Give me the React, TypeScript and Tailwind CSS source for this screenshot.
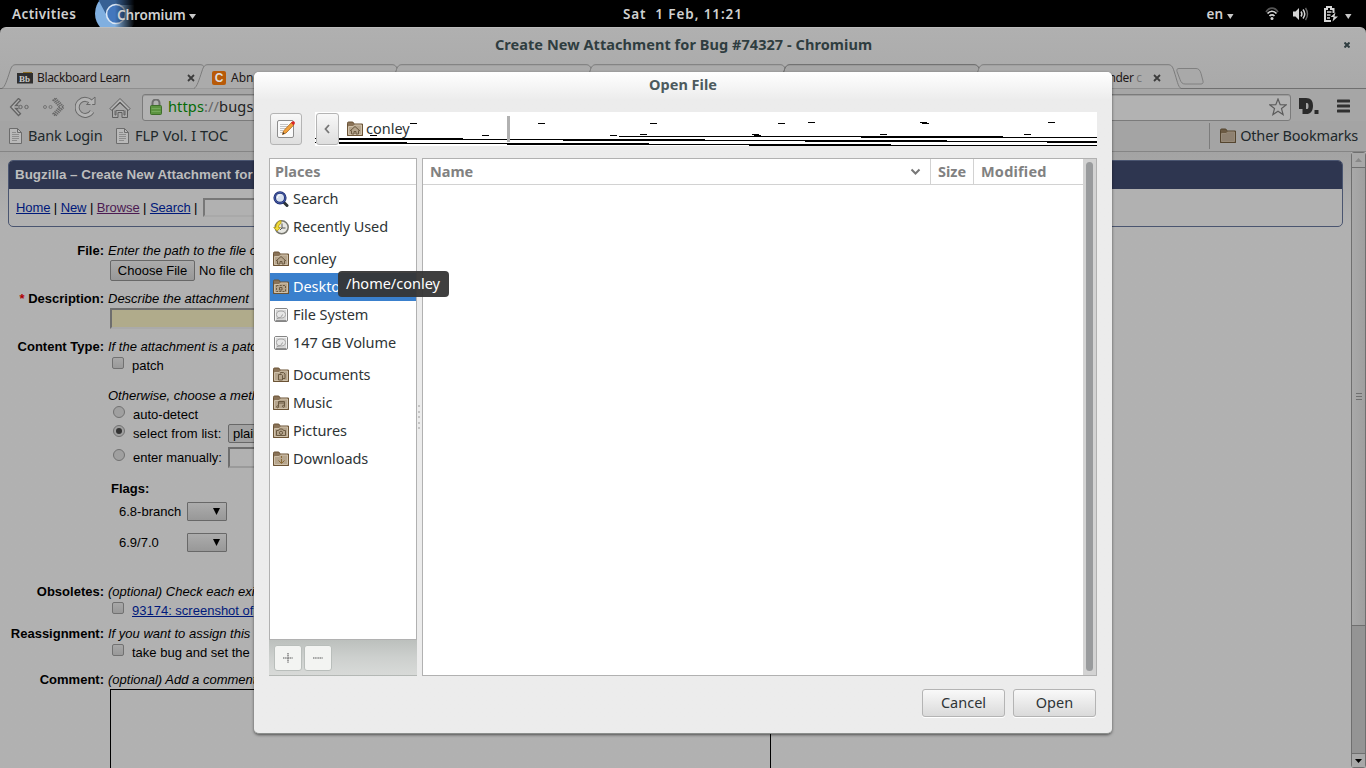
import type { ReactNode } from 'react'

const GTK = "font-['Noto_Sans',sans-serif]"
const WEB = "font-['Liberation_Sans',Arial,sans-serif]"

type Emblem = 'home' | 'desktop' | 'documents' | 'music' | 'pictures' | 'downloads' | 'none'

function FolderIcon({ emblem = 'none', dim = false }: { emblem?: Emblem; dim?: boolean }) {
  return (
    <svg width="16" height="16" viewBox="0 0 16 16" fill="none" className="shrink-0">
      <path d="M.5 2.2Q.5 1 1.5 1h4.3l1.4 2h8.3v11.5H.5z" fill={dim ? '#6b5a43' : '#8a7358'} stroke={dim ? '#54452f' : '#6b5335'} />
      <path d="M1.5 5.5h4.8l1.2-1.5h7v9.5h-13z" fill={dim ? '#8e8171' : '#b6a58d'} stroke={dim ? '#978a78' : '#cfc1aa'} />
      <path d="M.5 14.5h15V4" stroke={dim ? '#54452f' : '#6b5335'} />
      <g stroke="#6a5940" strokeWidth="1">
        {emblem === 'home' && <path d="M3 10l5-4.5 5 4.5M4.5 9.5v3.5H7v-2.5h2V13h2.5V9.5" />}
        {emblem === 'desktop' && (
          <>
            <path d="M3.5 6.5h9v6h-9z" strokeDasharray="2 1.2" />
            <path d="M6.5 8.5h2.5v2.5H6.5z" />
          </>
        )}
        {emblem === 'documents' && <path d="M5.5 7.5h3l1 1V13h-4zM7.5 6.5V5.5h3l1.5 1.5v4.5h-2" />}
        {emblem === 'music' && (
          <>
            <path d="M5.500 11.500v-5h6v4.500M5.500 8h6" />
            <circle cx="4.600" cy="11.800" r="1" />
            <circle cx="10.500" cy="11.300" r="1" />
          </>
        )}
        {emblem === 'pictures' && (
          <>
            <path d="M3.500 7.500h2l1-1.500h3l1 1.500h2v5h-9z" />
            <circle cx="8" cy="9.800" r="1.600" />
          </>
        )}
        {emblem === 'downloads' && <path d="M8.500 5v2M8.500 8v4M5.500 9.500l3 3 3-3" stroke="#8a6a35" />}
      </g>
    </svg>
  )
}

function DriveIcon() {
  return (
    <svg width="16" height="16" viewBox="0 0 16 16" fill="none">
      <rect x="1.500" y="1.500" width="13" height="13" rx="1.500" fill="#d6d6d6" stroke="#858585" />
      <rect x="2.500" y="2.500" width="11" height="11" stroke="#f4f4f4" />
      <ellipse cx="8" cy="7.500" rx="4.500" ry="3.500" fill="#e6e6e6" stroke="#a8a8a8" />
      <path d="M4 11.500c2 0 5-1.500 5.500-4" stroke="#9c9c9c" />
      <path d="M2.500 13.500h11" stroke="#8d8d8d" />
    </svg>
  )
}

function SearchIcon() {
  return (
    <svg width="16" height="16" viewBox="0 0 16 16" fill="none">
      <path d="M10.500 11l3.500 3.500" stroke="#2e3436" strokeWidth="3" strokeLinecap="round" />
      <circle cx="7" cy="6.800" r="5.300" fill="#d7e0ee" stroke="#1d2c6f" strokeWidth="2.600" />
      <circle cx="7" cy="6.800" r="5.300" stroke="#4a62ae" strokeWidth="1" />
      <path d="M4.500 7c0-2 1-3 3-3.200" stroke="#fff" />
    </svg>
  )
}

function RecentIcon() {
  return (
    <svg width="16" height="16" viewBox="0 0 16 16" fill="none">
      <circle cx="8.700" cy="8.300" r="6.500" fill="#e7e7e2" stroke="#77776f" strokeWidth="1.500" />
      <path d="M9 4.500V9h3.500M9 9l-2 2" stroke="#555" />
      <path d="M.7 8.500h2C3 4.500 5 2.300 8 1.500v3C6.300 5 5.500 6.500 5.500 8.500h2L4.200 12z" fill="#f2dc3c" stroke="#b39a10" strokeWidth=".8" />
    </svg>
  )
}

function PageIcon() {
  return (
    <svg width="13" height="16" viewBox="0 0 13 16" fill="none" className="shrink-0">
      <path d="M.5.5h8l4 4v11H.5z" fill="#b9b9b9" stroke="#6c6c6c" />
      <path d="M8.500.5v4h4" stroke="#6c6c6c" />
      <path d="M3 4.500h4M3 6.500h7M3 8.500h7M3 10.500h7M3 12.500h5" stroke="#8d8d8d" />
    </svg>
  )
}

function TopBar() {
  return (
    <header className="flex h-[27px] shrink-0 items-center bg-black pt-px font-['Noto_Sans',sans-serif] text-[13.5px] font-semibold text-[#d0d0d0]">
      <span className="ml-3 w-[83px] tracking-[0.4px]">Activities</span>
      <div className="relative -mt-px h-[27px] w-[110px] overflow-hidden">
        <svg width="44" height="27" viewBox="0 0 44 27" className="absolute left-0 top-0">
          <defs>
            <linearGradient id="appFade" x1="0" x2="1">
              <stop offset=".45" stopColor="#000" stopOpacity="0" />
              <stop offset=".9" stopColor="#000" />
            </linearGradient>
          </defs>
          <circle cx="21" cy="13.500" r="21" fill="#80afe0" />
          <path d="M4 1l9 17L20 5h22V-4H2z" fill="#376094" />
          <circle cx="21" cy="14" r="9.500" fill="#4377bd" stroke="#dbe7f5" strokeWidth="1.600" />
          <rect width="44" height="27" fill="url(#appFade)" />
        </svg>
        <span className="absolute left-[22px] top-[5px] leading-[20px] tracking-[-0.1px]">Chromium</span>
        <svg width="7" height="5" className="absolute left-[94px] top-[14px]"><path d="M0 0h7L3.500 5z" fill="#c8c8c8" /></svg>
      </div>
      <span className="ml-[418px] w-[160px] whitespace-pre tracking-[0.9px]">Sat  1 Feb, 11:21</span>
      <div className="ml-auto flex items-center pr-[14px]">
        <span>en</span>
        <svg width="7" height="5" className="ml-1 mt-1"><path d="M0 0h6.500L3.300 5z" fill="#c8c8c8" /></svg>
        <svg width="14" height="14" viewBox="0 0 14 14" fill="none" className="ml-[31px]">
          <path d="M1 5C4-.2 10-.2 13 5" stroke="#555" strokeWidth="1.600" />
          <path d="M2.500 6.500c2.500-3 6.500-3 9 0M4.500 9c1.500-1.600 3.500-1.600 5 0" stroke="#d5d5d5" strokeWidth="1.700" />
          <circle cx="7" cy="11.500" r="1.500" fill="#d5d5d5" />
        </svg>
        <svg width="16" height="14" viewBox="0 0 16 14" fill="none" className="ml-[14px]">
          <path d="M0 4.500h2.500L6 1v12L2.500 9.500H0z" fill="#d5d5d5" />
          <path d="M8 4.500q1.800 2.500 0 5M10 2.500q3.500 4.500 0 9" stroke="#d5d5d5" strokeWidth="1.500" />
          <path d="M12.500 1q4 6 0 12" stroke="#666" strokeWidth="1.400" />
        </svg>
        <svg width="15" height="16" viewBox="0 0 15 16" fill="none" className="ml-[14px]">
          <path d="M8 15H2V3h2V1h4v2h2.500v4" stroke="#d5d5d5" strokeWidth="2" />
          <path d="M4 6h4.500M4 9h3.500M4 12h3" stroke="#d5d5d5" strokeWidth="1.600" />
          <path d="M12.500 6.500L7.500 11h3l-1 4.500L15 10.500h-3.500z" fill="#d5d5d5" />
        </svg>
        <svg width="7" height="5" className="ml-[7px] mt-1"><path d="M0 0h6.500L3.300 5z" fill="#c8c8c8" /></svg>
      </div>
    </header>
  )
}

function Tab({ children, first = false, active = false }: { children?: ReactNode; first?: boolean; active?: boolean }) {
  return (
    <div className={`relative h-[25px] shrink-0 ${first ? 'w-[192px]' : 'w-[194px]'}`}>
      <svg width="214" height="25" viewBox="0 0 214 25" preserveAspectRatio="none" className="absolute -left-[2px] top-0">
        <path
          d="M0 24.500C3 23 5 16 8 7 9.500 2 11 .7 14 .7h184c3 0 4.500 1.300 6 6.300 3 9 4 16 7 17.500"
          fill={active ? '#a5a5a5' : '#ababab'}
          stroke={active ? '#666' : '#7c7c7c'}
        />
      </svg>
      <div className={`relative flex h-full items-center pt-[2px] text-[12px] text-[#1e1717] ${first ? 'pl-[13px]' : 'pl-[16px]'}`}>{children}</div>
    </div>
  )
}

function CloseMark() {
  return (
    <svg width="8" height="8" viewBox="0 0 8 8"><path d="M1 1l6 6M7 1L1 7" stroke="#3c3c3c" strokeWidth="1.800" /></svg>
  )
}

function BrowserChrome() {
  return (
    <div className={`shrink-0 bg-black ${GTK}`}>
      <div className="rounded-t-[6px] border-t border-[#bdbdbd] bg-linear-to-b from-[#b0b0b0] to-[#a2a2a2]">
        <div className="relative flex h-[36px] items-center justify-center pb-[2px] pl-[1px] text-[14.5px] font-bold text-[#2f3d40]">
          <span className="tracking-[0.06px]">Create New Attachment for Bug #74327 - Chromium</span>
          <svg width="6" height="6" viewBox="0 0 6 6" className="absolute right-[16px] top-[14px]">
            <path d="M.5.5l5 5M5.500.5l-5 5" stroke="#2f3d40" strokeWidth="2" />
          </svg>
        </div>
        <div className="flex h-[25px] border-b border-[#707070] pl-[4px]">
          <Tab first>
            <svg width="16" height="12" viewBox="0 0 16 12">
              <path d="M6 0h9v4H6z" fill="#8a6b20" />
              <path d="M0 1h16v10.500H0z" fill="#2f2f2f" />
              <text x="2" y="9.800" fontSize="9" fontWeight="700" fontFamily="Liberation Serif, serif" fill="#c9c9c9">Bb</text>
            </svg>
            <span className="ml-1 w-[150px] tracking-[-0.35px]">Blackboard Learn</span>
            <CloseMark />
          </Tab>
          <Tab>
            <span className="flex size-[14px] items-center justify-center rounded-[2px] bg-[#b85a08] font-['Liberation_Sans',sans-serif] text-[12px] font-bold text-[#ddd]">C</span>
            <span className="ml-[5px]">Abno</span>
          </Tab>
          <Tab />
          <Tab />
          <Tab active />
          <Tab>
            <span className="ml-[114px] tracking-[-0.35px]">ender <span className="text-[#777]">c</span></span>
            <span className="ml-[11px]"><CloseMark /></span>
          </Tab>
          <svg width="28" height="17" viewBox="0 0 28 17" className="ml-[10px] mt-[4px]" fill="none">
            <path d="M3 .5h17c2.500 0 4 1.500 5 5l2 7.500c.5 2-.5 3-2 3H9c-2.500 0-4-1.500-5-4.500L1 3.500C.5 1.500 1 .5 3 .5z" stroke="#808080" fill="#a9a9a9" />
          </svg>
        </div>
        <div className="flex h-[32px] items-end bg-[#a6a6a6] pl-[9px]">
          <svg width="22" height="20" viewBox="0 0 22 20" fill="none" className="mb-[4px]">
            <path d="M9.500 1.500L1.500 10l8 8.500 2-1.700L6.500 11.500h3M9.500 1.500l2 1.700L6.500 8.500h3" stroke="#636363" strokeWidth="1.300" fill="#b0b0b0" />
            <circle cx="11.500" cy="10" r="1.700" stroke="#666" />
            <circle cx="17.500" cy="10" r="1.700" stroke="#666" />
          </svg>
          <svg width="22" height="20" viewBox="0 0 22 20" fill="none" className="mb-[4px] ml-[12px]">
            <path d="M12.500 1.500l8 8.500-8 8.500M12.500 1.500l-1.800 1.700L17 10l-6.300 6.800 1.800 1.700" stroke="#686868" strokeWidth="2.400" strokeDasharray="1.200 .8" />
            <circle cx="2" cy="10" r="1.500" stroke="#757575" />
            <circle cx="7.500" cy="10" r="1.500" stroke="#757575" />
          </svg>
          <svg width="22" height="22" viewBox="0 0 22 22" fill="none" className="mb-[3px] ml-[10px]">
            <path d="M17 15.500a8 8 0 1 1-.5-9" stroke="#686868" strokeWidth="5" />
            <path d="M11.500 8.500h8.500V1z" fill="#b4b4b4" stroke="#686868" />
            <path d="M17 15.500a8 8 0 1 1-.5-9l-1 2" stroke="#b4b4b4" strokeWidth="3" />
          </svg>
          <svg width="22" height="22" viewBox="0 0 22 22" fill="none" className="mb-[2px] ml-[12px]">
            <path d="M1 11.500L11 1.500l10 10-1.500 1.800L11 5l-8.500 8.300z" stroke="#5f5f5f" fill="#b4b4b4" />
            <path d="M3.500 13v7.500h5.500v-5h4v5h5.500V13L11 6z" stroke="#5f5f5f" fill="#aaa" />
            <path d="M6 13.500v4.500h1v-4.500h8v4.500h1v-4.500" stroke="#5f5f5f" strokeWidth=".9" />
          </svg>
          <div className="ml-[11px] flex h-[27px] w-[1149px] items-center rounded-[3px] border border-[#7b7b7b] bg-[#b2b2b2] pb-[2px] pl-[7px] shadow-[inset_0_1px_0_#9b9b9b]">
            <svg width="12" height="16" viewBox="0 0 12 16" fill="none">
              <path d="M2.500 7V4a3.500 3.500 0 0 1 7 0v3" stroke="#6e6e6e" strokeWidth="2" />
              <rect x=".5" y="6.500" width="11" height="9" rx="1" fill="#5c9440" stroke="#3f6e2b" />
              <path d="M1.500 9.500h9M1.500 12.500h9" stroke="#75a95b" />
            </svg>
            <span className="ml-[6px] text-[14.6px] tracking-[0.1px] text-[#222]"><span className="text-[#066b06]">https</span><span className="text-[#666]">://</span>bugs</span>
            <svg width="18" height="18" viewBox="0 0 18 18" fill="none" className="ml-auto mr-[3px]">
              <path d="M9 1l2.200 5.600 6 .3-4.700 3.700 1.600 6L9 13.200l-5.100 3.400 1.600-6L.8 6.900l6-.3z" stroke="#5c5c5c" strokeWidth="1.200" />
            </svg>
          </div>
          <svg width="20" height="17" viewBox="0 0 20 17" className="mb-[6px] ml-[8px]">
            <path fillRule="evenodd" d="M0 0h7c5 0 7 3 7 7.700S12 16 7 16H3.500v-5H0zM7 5v6h1.200c1 0 1.300-1.300 1.300-3S9 5 8 5z" fill="#2a2a2a" />
            <path d="M15.500 12h4v4h-4z" fill="#2a2a2a" />
          </svg>
          <svg width="13" height="14" viewBox="0 0 13 14" className="mb-[8px] ml-[18px]">
            <path d="M1 2h11M1 7h11M1 12h11" stroke="#303030" strokeWidth="3" strokeLinecap="round" />
          </svg>
        </div>
        <div className="flex h-[31px] items-center border-b border-[#858585] bg-[#a4a4a4] pl-[9px] text-[14.5px] text-[#20282b]">
          <PageIcon />
          <span className="ml-[6px] w-[88px] tracking-[-0.15px]">Bank Login</span>
          <PageIcon />
          <span className="ml-[6px]">FLP Vol. I TOC</span>
          <div className="ml-auto flex h-[26px] items-center border-l border-[#7c7c7c] pl-[10px] pr-[8px]">
            <FolderIcon dim />
            <span className="ml-1 tracking-[-0.18px]">Other Bookmarks</span>
          </div>
        </div>
      </div>
    </div>
  )
}

function Row({ label, required, hint, className, children }: { label: string; required?: boolean; hint: string; className: string; children?: ReactNode }) {
  return (
    <div className={`flex ${className}`}>
      <div className="w-[104px] shrink-0 text-right font-bold">
        {required && <span className="text-[#b00000]">* </span>}
        {label}
      </div>
      <div className="ml-1">
        <div className="italic">{hint}</div>
        {children}
      </div>
    </div>
  )
}

function Check() {
  return <span className="mb-[5px] ml-1 mr-2 size-[12px] rounded-[2px] border border-[#717171] bg-linear-to-b from-[#a8a8a8] to-[#999]" />
}

function Radio({ on = false }: { on?: boolean }) {
  return (
    <span className="mb-[5px] ml-[5px] mr-2 flex size-[12px] items-center justify-center rounded-full border border-[#717171] bg-[#a0a0a0]">
      {on && <span className="size-[6px] rounded-full bg-[#333]" />}
    </span>
  )
}

function FlagRow({ name }: { name: string }) {
  return (
    <div className="flex h-[31px] items-center pl-[11px]">
      <span className="w-[68px]">{name}</span>
      <span className="flex h-[19px] w-[40px] items-center justify-end rounded-[1px] border border-[#686868] bg-linear-to-b from-[#acacac] to-[#989898] pr-[6px]">
        <svg width="7" height="7"><path d="M0 0h7L3.500 7z" fill="#000" /></svg>
      </span>
    </div>
  )
}

function BugzillaPage() {
  return (
    <main className={`min-w-0 flex-1 whitespace-nowrap bg-[#b1b1b1] bg-linear-to-b from-[#a3a3a3] to-[#b1b1b1] to-[70px] pt-[8px] text-[13px] leading-[19px] text-black ${WEB}`}>
      <div className="ml-[8px] h-[67px] w-[1335px] overflow-hidden rounded-[5px] border border-[#4a5570] bg-[#b1b1b1]">
        <div className="h-[28px] bg-[#2e3650] pl-[6px] text-[13.4px] font-bold leading-[28px] text-[#bdbdbd]">Bugzilla – Create New Attachment for</div>
        <div className="flex h-[37px] items-center gap-[3.500px] pl-[7px]">
          <a className="tracking-[-0.1px] text-[#00197a] underline">Home</a>|
          <a className="tracking-[-0.1px] text-[#00197a] underline">New</a>|
          <a className="tracking-[-0.1px] text-[#4c1a52] underline">Browse</a>|
          <a className="tracking-[-0.1px] text-[#00197a] underline">Search</a>|
          <span className="ml-[2px] h-[19px] w-[160px] border-2 border-[#777] border-b-[#a9a9a9]" />
        </div>
      </div>

      <Row label="File:" hint="Enter the path to the file o" className="mt-[14px] h-[48px]">
        <div className="ml-[2px] flex items-center">
          <span className="flex h-[21px] w-[85px] items-center justify-center rounded-[2px] border border-[#686868] bg-linear-to-b from-[#ababab] to-[#989898]">Choose File</span>
          <span className="ml-1">No file ch</span>
        </div>
      </Row>
      <Row label="Description:" required hint="Describe the attachment" className="h-[48px]">
        <div className="ml-[2px] h-[21px] w-[300px] border-2 border-[#6e6e6e] border-b-[#aaa] bg-[#b0ab8b]" />
      </Row>
      <Row label="Content Type:" hint="If the attachment is a patc" className="h-[142px]">
        <div className="flex h-[19px] items-center"><Check />patch</div>
        <div className="mt-[11px] italic">Otherwise, choose a meth</div>
        <div className="flex h-[19px] items-center"><Radio />auto-detect</div>
        <div className="flex h-[19px] items-center">
          <Radio on />
          <span className="w-[95px] tracking-[0.1px]">select from list:</span>
          <span className="h-[19px] w-[150px] rounded-[2px] border border-[#686868] bg-[#a2a2a2] pl-[4px] leading-[17px]">plain</span>
        </div>
        <div className="mt-[4px] flex h-[21px] items-center">
          <Radio />
          <span className="w-[95px]">enter manually:</span>
          <span className="h-[21px] w-[180px] border-2 border-[#6e6e6e] border-b-[#9a9a9a]" />
        </div>
      </Row>
      <div className="ml-[108px] h-[103px]">
        <div className="h-[17px] pl-[3px] font-bold leading-[19px]">Flags:</div>
        <FlagRow name="6.8-branch" />
        <FlagRow name="6.9/7.0" />
      </div>
      <Row label="Obsoletes:" hint="(optional) Check each exi" className="h-[42px]">
        <div className="flex h-[19px] items-center"><Check /><a className="text-[#00197a] underline">93174: screenshot of</a></div>
      </Row>
      <Row label="Reassignment:" hint="If you want to assign this" className="h-[46px]">
        <div className="flex h-[19px] items-center"><Check />take bug and set the</div>
      </Row>
      <Row label="Comment:" hint="(optional) Add a comment" className="h-[100px]">
        <div className="ml-[2px] h-[90px] w-[661px] border border-black" />
      </Row>
    </main>
  )
}

function PageScrollbar() {
  return (
    <div className="flex w-[15px] shrink-0 flex-col rounded-[3px] border border-[#6f6f6f] bg-[#949494]">
      <div className="flex h-[14px] items-center justify-center bg-[#a8a8a8]">
        <svg width="7" height="4"><path d="M0 4h7L3.500 0z" fill="#888" /></svg>
      </div>
      <div className="flex h-[459px] flex-col items-center justify-center gap-[2px] border-y border-[#6f6f6f] bg-linear-to-r from-[#a9a9a9] to-[#9f9f9f]">
        <span className="h-px w-[6px] bg-[#6f6f6f]" />
        <span className="h-px w-[6px] bg-[#6f6f6f]" />
        <span className="h-px w-[6px] bg-[#6f6f6f]" />
      </div>
      <div className="mt-auto flex h-[14px] items-center justify-center border-t border-[#6f6f6f] bg-[#a8a8a8]">
        <svg width="7" height="4"><path d="M0 0h7L3.500 4z" fill="#000" /></svg>
      </div>
    </div>
  )
}

// [x, y, width] of the redraw glitches, relative to the path bar
const glitches = [
  [0, 26, 1], [0, 30, 1],
  [24, 26, 124], [24, 27, 366], [248, 28, 384], [490, 29, 292], [732, 30, 50],
  [24, 30, 68], [24, 31, 310], [192, 32, 384], [434, 33, 348],
  [304, 24, 384], [546, 25, 236],
  [95, 11, 7], [55, 23, 7], [167, 23, 7], [223, 11, 7], [335, 11, 7], [463, 11, 7],
  [493, 10, 7], [295, 23, 7], [325, 22, 7], [437, 22, 7], [439, 23, 7],
  [605, 10, 7], [607, 11, 7], [733, 10, 7], [565, 22, 7], [709, 22, 7],
]

function PathBar() {
  return (
    <div className="relative flex h-[34px] w-[782px] items-center bg-white">
      <svg width="782" height="34" className="absolute inset-0" shapeRendering="crispEdges">
        {glitches.map(([x, y, w]) => <rect key={`${x}-${y}`} x={x} y={y} width={w} height="1" fill="#000" />)}
        <rect x="192" y="4" width="3" height="26" fill="#b1b1b1" />
      </svg>
      <button className="relative ml-px flex h-[32px] w-[23px] items-center justify-center rounded-[3px] border border-[#b4b4b4] bg-linear-to-b from-[#f8f8f8] to-[#dedede] pr-px">
        <svg width="6" height="10" viewBox="0 0 6 10" fill="none"><path d="M5 1L1.500 5 5 9" stroke="#777" strokeWidth="1.800" /></svg>
      </button>
      <span className="relative ml-[8px] flex items-center gap-[3px]"><FolderIcon emblem="home" />conley</span>
    </div>
  )
}

function Place({ icon, name, selected = false }: { icon: ReactNode; name: string; selected?: boolean }) {
  return (
    <li className={`flex h-[28px] items-center gap-1 pl-[3px] tracking-[-0.08px] ${selected ? 'bg-[#3a80cd] text-white' : ''}`}>
      {icon}
      {name}
    </li>
  )
}

function DialogButton({ children }: { children: ReactNode }) {
  return (
    <button className="h-[28px] w-[83px] rounded-[3px] border border-[#b4b4b4] bg-linear-to-b from-[#f9f9f9] to-[#dadada] pb-[2px] leading-[24px] shadow-[0_1px_0_#fff]">
      {children}
    </button>
  )
}

function OpenFileDialog() {
  return (
    <section className={`absolute left-[254px] top-[72px] flex h-[662px] w-[858px] flex-col rounded-[5px] border-b border-[#8b8e8c] bg-[#ececec] bg-linear-to-b from-white to-[#ececec] to-[28px] pl-[15px] text-[14.5px] text-[#2e3436] shadow-[0_1px_3px_rgba(0,0,0,0.55)] ${GTK}`}>
      <h1 className="-ml-[15px] h-[40px] pt-[2px] text-center text-[14.5px] font-bold leading-[20px] text-[#4d5a5e]">Open File</h1>
      <div className="flex gap-[13px]">
        <button className="ml-[1px] mt-px flex h-[32px] w-[32px] items-center justify-center rounded-[3px] border border-[#b4b4b4] bg-linear-to-b from-[#f8f8f8] to-[#dedede]">
          <svg width="20" height="20" viewBox="0 0 20 20" fill="none">
            <rect x="1.500" y="1.500" width="16" height="17" rx="1.500" fill="#fafafa" stroke="#8d8d8d" />
            <path d="M4 5.500h8M4 7.500h8M4 9.500h6M4 11.500h3M4 13.500h3" stroke="#c4c4c4" />
            <path d="M6.500 15.500l1-3.500 8-8.500 2.500 2.300-8 8.200z" fill="#f2a13a" stroke="#a8651c" strokeWidth=".8" />
            <path d="M15 4l1.300-1.500c1.500-.8 3.200.7 2.400 2.300L17.500 6.300z" fill="#d92424" />
            <path d="M6.500 15.500l.7-2.300 1.500 1.500z" fill="#333" />
          </svg>
        </button>
        <PathBar />
      </div>

      <div className="mt-[12px] flex h-[518px]">
        <div className="flex w-[148px] flex-col">
          <div className="h-[482px] border border-[#b1b1b1] bg-white">
            <div className="h-[26px] border-b border-[#d2d2d2] pl-[5px] font-bold leading-[24px] text-[#818181]">Places</div>
            <ul>
              <Place icon={<SearchIcon />} name="Search" />
              <Place icon={<RecentIcon />} name="Recently Used" />
              <li className="h-1" />
              <Place icon={<FolderIcon emblem="home" />} name="conley" />
              <Place icon={<FolderIcon emblem="desktop" />} name="Deskto" selected />
              <Place icon={<DriveIcon />} name="File System" />
              <Place icon={<DriveIcon />} name="147 GB Volume" />
              <li className="h-1" />
              <Place icon={<FolderIcon emblem="documents" />} name="Documents" />
              <Place icon={<FolderIcon emblem="music" />} name="Music" />
              <Place icon={<FolderIcon emblem="pictures" />} name="Pictures" />
              <Place icon={<FolderIcon emblem="downloads" />} name="Downloads" />
            </ul>
          </div>
          <div className="flex h-[36px] items-center gap-[2px] border-b border-[#b4b8b5] bg-linear-to-b from-[#bcc0bd] via-[#cdd0ce] to-[#d8dad8] pl-[5px]">
            <button className="flex h-[26px] w-[28px] items-center justify-center rounded-[3px] border border-[#b9bebb] bg-[#f3f4f2]">
              <svg width="10" height="10"><path d="M0 5h10M5 0v10" stroke="#8a8a8a" strokeWidth="1.600" strokeDasharray="1.200 .5" /></svg>
            </button>
            <button className="flex h-[26px] w-[28px] items-center justify-center rounded-[3px] border border-[#b9bebb] bg-[#f3f4f2]">
              <svg width="10" height="10"><path d="M0 5h10" stroke="#8a8a8a" strokeWidth="1.600" strokeDasharray="1.200 .5" /></svg>
            </button>
          </div>
        </div>
        <div className="flex w-[5px] flex-col items-start justify-center gap-[3.500px] pl-[1px]">
          {[0, 1, 2, 3, 4].map((i) => <span key={i} className="size-[2px] bg-[#c4c4c4]" />)}
        </div>
        <div className="flex w-[675px] border border-[#b1b1b1] bg-white">
          <div className="flex-1">
            <div className="flex h-[26px] border-b border-[#d2d2d2] font-bold leading-[24px] text-[#818181]">
              <span className="flex w-[508px] justify-between border-r border-[#d2d2d2] pl-[7px] pr-[9px]">
                Name
                <svg width="11" height="8" viewBox="0 0 11 8" fill="none" className="mt-[9px]"><path d="M1.500 1.500l4 4 4-4" stroke="#777" strokeWidth="2" /></svg>
              </span>
              <span className="w-[43px] border-r border-[#d2d2d2] pl-[7px]">Size</span>
              <span className="pl-[7px] tracking-[0.2px]">Modified</span>
            </div>
          </div>
          <div className="w-[13px] bg-[#d3d3d3] px-[3px] pb-[4px] pt-[3px]">
            <div className="h-full rounded-full bg-[#999b9d]" />
          </div>
        </div>
      </div>

      <div className="mt-[13px] flex gap-2 self-end pr-[16px]">
        <DialogButton>Cancel</DialogButton>
        <DialogButton>Open</DialogButton>
      </div>
    </section>
  )
}

export default function App() {
  return (
    <div className="relative flex h-[768px] w-[1366px] flex-col overflow-hidden bg-black">
      <TopBar />
      <BrowserChrome />
      <div className="flex min-h-0 flex-1 bg-[#b1b1b1]">
        <BugzillaPage />
        <PageScrollbar />
      </div>
      <OpenFileDialog />
      <div className={`absolute left-[338px] top-[271px] h-[26px] w-[111px] rounded-[4px] bg-[#353535]/95 pr-px text-center text-[14.5px] leading-[25px] text-white ${GTK}`}>
        /home/conley
      </div>
    </div>
  )
}
